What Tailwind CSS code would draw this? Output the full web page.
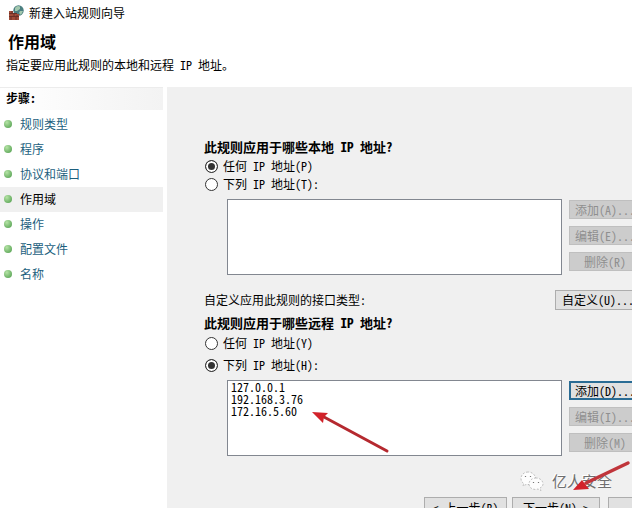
<!DOCTYPE html>
<html lang="zh-CN">
<head>
  <meta charset="UTF-8" />
  <meta name="viewport" content="width=device-width, initial-scale=1" />
  <title>新建入站规则向导</title>
  <script src="https://cdn.jsdelivr.net/npm/@tailwindcss/browser@4"></script>
</head>
<body class="relative flex flex-col h-screen overflow-hidden bg-white text-black text-[12px] leading-4 font-['Noto_Sans_CJK_SC',sans-serif] [font-feature-settings:'hwid']">

  <!-- Title bar -->
  <header class="h-[87px] shrink-0 pt-[5px]">
    <div class="flex items-center gap-[5px] pl-2">
      <svg class="w-4 h-4" viewBox="0 0 16 16">
        <circle cx="10.500" cy="5.500" r="5.200" fill="#4b7f80" />
        <path d="M7 3Q9 0 12 1.500L12 4L9 6L7 6ZM12 6L15 6L13 10L11 8Z" fill="#a3c8ae" />
        <path d="M1 6H5V8H9V9H11V15H1Z" fill="#a14c38" />
        <path d="M1 8.500H9M1 11.500H11M4 6V8M6 9V11M3 12V15M8 12V15M9 10V11" stroke="#6b2f26" fill="none" />
      </svg>
      <span>新建入站规则向导</span>
    </div>
    <h1 class="mt-2 pl-2 text-[16px] leading-6 font-bold">作用域</h1>
    <p class="mt-1 pl-[6px]">指定要应用此规则的本地和远程 IP 地址。</p>
  </header>

  <div class="flex flex-1 min-h-0">
    <!-- Steps -->
    <nav class="w-[163px] shrink-0">
      <h2 class="h-[23px] mb-[2px] pl-[6px] pt-[2px] font-bold border-t border-[#ececec] bg-linear-to-r from-white to-[#f3f3f3]">步骤:</h2>
      <ul class="text-[#1c5f7e]">
        <li><a href="#" class="flex items-center gap-2 h-[25px] pl-1 pb-[2px]"><span class="w-2 h-2 rounded-full bg-radial-[at_35%_30%] from-[#b5e3a5] to-[#4a9a48]"></span>规则类型</a></li>
        <li><a href="#" class="flex items-center gap-2 h-[25px] pl-1 pb-[2px]"><span class="w-2 h-2 rounded-full bg-radial-[at_35%_30%] from-[#b5e3a5] to-[#4a9a48]"></span>程序</a></li>
        <li><a href="#" class="flex items-center gap-2 h-[25px] pl-1 pb-[2px]"><span class="w-2 h-2 rounded-full bg-radial-[at_35%_30%] from-[#b5e3a5] to-[#4a9a48]"></span>协议和端口</a></li>
        <li><a href="#" class="flex items-center gap-2 h-[25px] pl-1 pb-[2px] bg-[#f0f0f0] text-black"><span class="w-2 h-2 rounded-full bg-radial-[at_35%_30%] from-[#b5e3a5] to-[#4a9a48]"></span>作用域</a></li>
        <li><a href="#" class="flex items-center gap-2 h-[25px] pl-1 pb-[2px]"><span class="w-2 h-2 rounded-full bg-radial-[at_35%_30%] from-[#b5e3a5] to-[#4a9a48]"></span>操作</a></li>
        <li><a href="#" class="flex items-center gap-2 h-[25px] pl-1 pb-[2px]"><span class="w-2 h-2 rounded-full bg-radial-[at_35%_30%] from-[#b5e3a5] to-[#4a9a48]"></span>配置文件</a></li>
        <li><a href="#" class="flex items-center gap-2 h-[25px] pl-1 pb-[2px]"><span class="w-2 h-2 rounded-full bg-radial-[at_35%_30%] from-[#b5e3a5] to-[#4a9a48]"></span>名称</a></li>
      </ul>
    </nav>

    <!-- The right edge of the dialog runs past the window -->
    <main class="flex-1 min-w-0 ml-1 -mr-[9px] pl-[37px] pt-[52px] bg-[#f0f0f0]">
      <form>
        <fieldset>
          <legend class="text-[13px] font-bold">此规则应用于哪些本地 IP 地址?</legend>
          <div class="flex flex-col gap-[2px] pt-[3px] pl-[1px]">
            <label class="flex items-center gap-[5px]"><input type="radio" name="local" checked class="appearance-none w-[13px] h-[13px] rounded-full border border-[#333] bg-white checked:bg-[#333] checked:shadow-[inset_0_0_0_2px_white]" />任何 IP 地址(P)</label>
            <label class="flex items-center gap-[5px]"><input type="radio" name="local" class="appearance-none w-[13px] h-[13px] rounded-full border border-[#333] bg-white checked:bg-[#333] checked:shadow-[inset_0_0_0_2px_white]" />下列 IP 地址(T):</label>
          </div>
          <div class="flex gap-[7px] mt-[7px] pl-[23px]">
            <textarea readonly aria-label="本地 IP 地址" class="flex-1 min-w-0 h-[76px] pl-[3px] border border-[#828790] bg-white leading-3 resize-none overflow-hidden"></textarea>
            <div class="flex flex-col gap-[7px] w-[72px] pt-[1px]">
              <button type="button" disabled class="h-[19px] leading-4 border border-[#bfbfbf] bg-[#cccccc] text-[#8f8f8f] whitespace-nowrap">添加(A)...</button>
              <button type="button" disabled class="h-[19px] leading-4 border border-[#bfbfbf] bg-[#cccccc] text-[#8f8f8f] whitespace-nowrap">编辑(E)...</button>
              <button type="button" disabled class="h-[19px] leading-4 border border-[#bfbfbf] bg-[#cccccc] text-[#8f8f8f] whitespace-nowrap">删除(R)</button>
            </div>
          </div>
        </fieldset>

        <div class="flex items-center justify-between mt-[15px]">
          <label for="custom">自定义应用此规则的接口类型:</label>
          <button type="button" id="custom" class="w-[86px] h-5 leading-4 border border-[#adadad] bg-[#e1e1e1] whitespace-nowrap">自定义(U)...</button>
        </div>

        <fieldset class="mt-[5px]">
          <legend class="text-[13px] font-bold">此规则应用于哪些远程 IP 地址?</legend>
          <div class="flex flex-col gap-[6px] pt-1 pl-[1px]">
            <label class="flex items-center gap-[5px]"><input type="radio" name="remote" class="appearance-none w-[13px] h-[13px] rounded-full border border-[#333] bg-white checked:bg-[#333] checked:shadow-[inset_0_0_0_2px_white]" />任何 IP 地址(Y)</label>
            <label class="flex items-center gap-[5px]"><input type="radio" name="remote" checked class="appearance-none w-[13px] h-[13px] rounded-full border border-[#333] bg-white checked:bg-[#333] checked:shadow-[inset_0_0_0_2px_white]" />下列 IP 地址(H):</label>
          </div>
          <div class="flex gap-[7px] mt-[7px] pl-[23px]">
            <textarea readonly aria-label="远程 IP 地址" class="flex-1 min-w-0 h-[76px] pl-[3px] border border-[#828790] bg-white leading-3 resize-none overflow-hidden">127.0.0.1
192.168.3.76
172.16.5.60</textarea>
            <div class="flex flex-col gap-[7px] w-[72px] pt-[1px]">
              <button type="button" class="h-[19px] leading-[15px] border-2 border-[#2a6c94] bg-[#e1e1e1] whitespace-nowrap">添加(D)...</button>
              <button type="button" disabled class="h-[19px] leading-4 border border-[#bfbfbf] bg-[#cccccc] text-[#8f8f8f] whitespace-nowrap">编辑(I)...</button>
              <button type="button" disabled class="h-[19px] leading-4 border border-[#bfbfbf] bg-[#cccccc] text-[#8f8f8f] whitespace-nowrap">删除(M)</button>
            </div>
          </div>
        </fieldset>

        <div class="flex justify-end mt-[41px] -mr-[55px]">
          <button type="button" class="w-[83px] h-[22px] mr-[5px] border border-[#adadad] bg-[#e1e1e1] whitespace-nowrap">&lt; 上一步(B)</button>
          <button type="button" class="w-[88px] h-[22px] mr-2 border border-[#adadad] bg-[#e1e1e1] whitespace-nowrap">下一步(N) &gt;</button>
          <button type="button" class="w-[88px] h-[22px] border border-[#adadad] bg-[#e1e1e1] whitespace-nowrap">取消</button>
        </div>
      </form>
    </main>
  </div>

  <!-- Watermark -->
  <div class="absolute right-5 top-[469px] flex items-center gap-2">
    <svg class="w-6 h-5" viewBox="0 0 24 20" fill="#fdfdfd" stroke="#9a9a9a" stroke-width=".6" stroke-dasharray="2 1.500">
      <path d="M8 1C4 1 1 4 1 7.500C1 10 2 11.500 4 12.500L3 15L6 13.500H10C14 13 16 10 15.500 7C15 3.500 12 1 8 1Z" />
      <path d="M16 7C12 7 9 9.500 9 13S12 18.500 16 18.500L18 18L21 19.500L20 17C22 16 23 14.500 23 13C23 9.500 20 7 16 7Z" />
      <path d="M5.500 5V6M10.500 5V6M13.500 11V12M18.500 11V12" stroke="#777" stroke-width="1.200" stroke-dasharray="none" />
    </svg>
    <span class="text-[15px] leading-6 text-[#6f6f6f] text-shadow-[-1px_-1px_0_white]">亿人安全</span>
  </div>

  <!-- Arrows -->
  <svg class="absolute left-[312px] top-[409px] w-[78px] h-[46px]" viewBox="0 0 78 46">
    <path d="M12 8L75 42" stroke="#b5292f" stroke-width="3" stroke-linecap="round" />
    <path d="M0 3L16 4L12 8L11 14Z" fill="#d2222a" />
  </svg>
  <svg class="absolute right-0 top-[458px] w-[60px] h-[34px]" viewBox="0 0 60 34">
    <path d="M14 25L56 5" stroke="#c0353b" stroke-width="3.500" stroke-linecap="round" />
    <path d="M1 32L10 22L13 26L17 31Z" fill="#d2222a" />
  </svg>
</body>
</html>
